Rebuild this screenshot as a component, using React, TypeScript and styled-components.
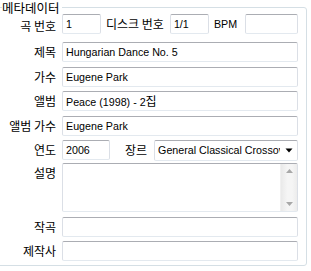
import styled, { createGlobalStyle } from "styled-components";

const Global = createGlobalStyle`
  html, body {
    margin: 0;
    padding: 0;
    background: #ffffff;
    overflow: hidden;
  }
  body {
    font-family: "Liberation Sans", Arial, sans-serif;
    font-size: 10.7px;
    color: #000;
  }
`;

const korean = `"Noto Sans CJK KR", "Noto Sans", sans-serif`;

const GroupBox = styled.section`
  margin: 7px 0 0 -8px;
  width: 315px;
  height: 259px;
  box-sizing: border-box;
  border: 1px solid #d5dfe5;
  border-radius: 3px;
  padding: 0 8px 0 9px;
`;

const Title = styled.div`
  width: fit-content;
  margin-top: -8px;
  padding-right: 2px;
  background: #fff;
  font-family: ${korean};
  font-size: 12.5px;
  line-height: 15px;
  height: 15px;
`;

const Form = styled.div`
  display: grid;
  grid-template-columns: 54px minmax(0, 1fr);
  column-gap: 6px;
  row-gap: 4.5px;
  margin-top: -1px;
`;

const Label = styled.label<{ $top?: boolean; $mt?: number }>`
  font-family: ${korean};
  font-size: 12px;
  line-height: 20px;
  height: 20px;
  text-align: right;
  white-space: nowrap;
  align-self: ${(p) => (p.$top ? "start" : "center")};
  margin-top: ${(p) => p.$mt ?? 0}px;
`;

const InlineLabel = styled.span<{ $latin?: boolean; $ml?: number; $mr?: number }>`
  font-family: ${(p) => (p.$latin ? `"Liberation Sans", Arial, sans-serif` : korean)};
  font-size: ${(p) => (p.$latin ? "10.7px" : "12px")};
  line-height: 20px;
  white-space: nowrap;
  flex: none;
  margin-left: ${(p) => p.$ml ?? 0}px;
  margin-right: ${(p) => p.$mr ?? 0}px;
`;

const Line = styled.div<{ $first?: boolean }>`
  display: flex;
  align-items: center;
  min-width: 0;
  height: 20px;
  margin-bottom: ${(p) => (p.$first ? 3.5 : 0)}px;
`;

const Box = styled.div<{ $w?: number }>`
  box-sizing: border-box;
  height: 20px;
  min-width: 0;
  ${(p) => (p.$w ? `width: ${p.$w}px; flex: none;` : "flex: 1;")}
  border: 1px solid #dbdfe6;
  border-top-color: #abadb3;
  border-bottom-color: #e3e9ef;
  border-radius: 2px;
  background: #fff;
  padding: 0 3px;
  font-family: "Liberation Sans", Arial, sans-serif;
  font-size: 10.7px;
  line-height: 18px;
  white-space: nowrap;
  overflow: hidden;
`;

const Combo = styled.div`
  flex: 1;
  min-width: 0;
  box-sizing: border-box;
  height: 21px;
  display: flex;
  align-items: center;
  border: 1px solid #dbdfe6;
  border-top-color: #abadb3;
  border-bottom-color: #e3e9ef;
  border-radius: 2px;
  background: #fff;
  padding-left: 3px;
`;

const ComboText = styled.div`
  flex: 1;
  min-width: 0;
  overflow: hidden;
  white-space: nowrap;
`;

const ComboArrow = styled.div`
  width: 17px;
  flex: none;
  display: flex;
  justify-content: center;
  align-items: center;
`;

const MemoBox = styled.div`
  box-sizing: border-box;
  height: 49px;
  margin-top: -1.5px;
  display: flex;
  border: 1px solid #dbdfe6;
  border-top-color: #abadb3;
  border-bottom-color: #e3e9ef;
  border-radius: 2px;
  background: #fff;
`;

const MemoText = styled.div`
  flex: 1;
`;

const ScrollBar = styled.div`
  width: 16px;
  display: flex;
  flex-direction: column;
  justify-content: space-between;
  align-items: center;
  background: linear-gradient(to right, #e9e9e9, #f5f5f5 40%, #f5f5f5 70%, #ececec);
  border-left: 1px solid #f0f0f0;
  padding: 5px 0 5px;
`;

export default function App() {
  return (
    <>
      <Global />
      <GroupBox>
        <Title>메타데이터</Title>
        <Form>
          <Label>곡 번호</Label>
          <Line $first>
            <Box $w={39}>1</Box>
            <InlineLabel $ml={5} $mr={6}>
              디스크 번호
            </InlineLabel>
            <Box $w={39}>1/1</Box>
            <InlineLabel $latin $ml={5} $mr={8}>
              BPM
            </InlineLabel>
            <Box />
          </Line>

          <Label>제목</Label>
          <Box>Hungarian Dance No. 5</Box>

          <Label>가수</Label>
          <Box>Eugene Park</Box>

          <Label>앨범</Label>
          <Box>
            Peace (1998) - 2<span style={{ fontFamily: korean, fontSize: "12px" }}>집</span>
          </Box>

          <Label>앨범 가수</Label>
          <Box>Eugene Park</Box>

          <Label>연도</Label>
          <Line>
            <Box $w={48}>2006</Box>
            <InlineLabel $ml={15} $mr={7}>
              장르
            </InlineLabel>
            <Combo>
              <ComboText>General Classical Crossover</ComboText>
              <ComboArrow>
                <svg width="8" height="5" viewBox="0 0 8 5">
                  <path d="M0.5 0.5 L7.5 0.5 L4 4.5 Z" fill="#000" />
                </svg>
              </ComboArrow>
            </Combo>
          </Line>

          <Label $top $mt={-1.5}>설명</Label>
          <MemoBox>
            <MemoText />
            <ScrollBar>
              <svg width="7" height="4" viewBox="0 0 7 4">
                <path d="M3.5 0 L7 4 L0 4 Z" fill="#a8a8a8" />
              </svg>
              <svg width="7" height="4" viewBox="0 0 7 4">
                <path d="M0 0 L7 0 L3.5 4 Z" fill="#a8a8a8" />
              </svg>
            </ScrollBar>
          </MemoBox>

          <Label>작곡</Label>
          <Box />

          <Label>제작사</Label>
          <Box />
        </Form>
      </GroupBox>
    </>
  );
}
